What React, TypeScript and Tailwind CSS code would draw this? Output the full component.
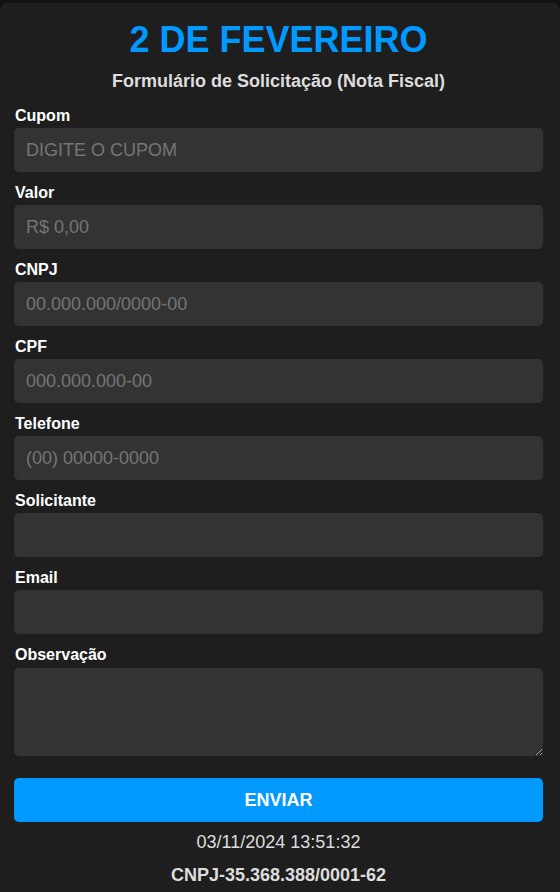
const fields = [
  { label: "Cupom", placeholder: "DIGITE O CUPOM" },
  { label: "Valor", placeholder: "R$ 0,00" },
  { label: "CNPJ", placeholder: "00.000.000/0000-00" },
  { label: "CPF", placeholder: "000.000.000-00" },
  { label: "Telefone", placeholder: "(00) 00000-0000" },
  { label: "Solicitante", placeholder: "" },
  { label: "Email", placeholder: "" },
];

const App = () => {
  return (
    <div className="min-h-screen bg-[#121212] pt-[3px] font-['Liberation_Sans',Arial,sans-serif]">
      <div className="bg-[#1e1e1e] rounded-t-lg pl-[14px] pr-[17px] pt-4 pb-6">
        <h1 className="text-center text-[36px] leading-[41px] font-bold text-[#0099ff]">2 DE FEVEREIRO</h1>
        <h2 className="mt-[11px] text-center text-[18px] leading-[21px] font-bold text-[#dddddd]">
          Formulário de Solicitação (Nota Fiscal)
        </h2>
        <form className="mt-[15px]">
          {fields.map((f) => (
            <div key={f.label} className="mb-3">
              <label className="block text-[16px] leading-[18px] font-bold text-white mb-[3px] pl-px">{f.label}</label>
              <input
                type="text"
                placeholder={f.placeholder}
                className="block w-full h-[44px] px-3 rounded-[5px] bg-[#333333] text-[18px] text-white placeholder:text-[#757575] outline-none"
              />
            </div>
          ))}
          <div className="mb-[22px]">
            <label className="block text-[16px] leading-[18px] font-bold text-white mb-[4px] pl-px">Observação</label>
            <textarea className="block w-full h-[88px] px-3 py-2 rounded-[5px] bg-[#333333] text-[18px] text-white outline-none" />
          </div>
          <button
            type="button"
            className="block w-full h-[44px] rounded-[5px] bg-[#0099ff] text-white text-[18px] font-bold"
          >
            ENVIAR
          </button>
        </form>
        <p className="mt-[10px] text-center text-[18px] leading-[21px] text-[#dddddd]">03/11/2024 13:51:32</p>
        <p className="mt-[12px] text-center text-[18px] leading-[21px] font-bold text-[#dddddd]">CNPJ-35.368.388/0001-62</p>
      </div>
    </div>
  );
};

export default App;
